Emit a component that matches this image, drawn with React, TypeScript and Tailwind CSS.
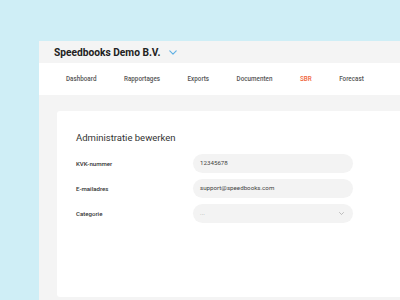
import React from "react";

const Chevron = ({ className, sw = 1.2 }: { className?: string; sw?: number }) => (
  <svg viewBox="0 0 10 6" className={className} fill="none" stroke="currentColor" strokeWidth={sw} strokeLinecap="round" strokeLinejoin="round">
    <path d="M1 1l4 4 4-4" />
  </svg>
);

const navItems = ["Dashboard", "Rapportages", "Exports", "Documenten", "SBR", "Forecast"];

export default function App() {
  return (
    <div className="w-[400px] h-[300px] bg-[#cfeef6] overflow-hidden flex flex-col pt-[41px] pl-[39px]" style={{ fontFamily: "Roboto, 'Liberation Sans', sans-serif" }}>
      <div className="flex-1 flex flex-col bg-[#f4f4f4]">
        <div className="h-[22px] flex items-center pl-[15px] pt-[1px]">
          <span className="text-[10.2px] font-bold text-[#222]">Speedbooks Demo B.V.</span>
          <Chevron sw={1.4} className="w-[8px] h-[5px] ml-[9px] text-[#5fb0e4]" />
        </div>
        <div className="h-[32px] bg-white flex items-center pl-[27px] pt-[1px] gap-[27.5px]">
          {navItems.map((n) => (
            <span key={n} className={`text-[6.3px] font-medium ${n === "SBR" ? "text-[#f0623a]" : "text-[#555]"}`}>{n}</span>
          ))}
        </div>
        <div className="flex-1 flex flex-col pt-[16px] pl-[18px] pb-[3px]">
          <div className="flex-1 bg-white rounded-l-[3px] pl-[19px] pt-[20px]">
            <div className="text-[9.5px] text-[#333] h-[14px] leading-[14px]">Administratie bewerken</div>
            <div className="flex flex-col gap-[6px] mt-[9px]">
              {[
                ["KVK-nummer", "12345678"],
                ["E-mailadres", "support@speedbooks.com"],
              ].map(([l, v]) => (
                <div key={l} className="flex items-center">
                  <span className="w-[117px] text-[6.1px] font-medium text-[#333]">{l}</span>
                  <div className="w-[160px] h-[19px] rounded-full bg-[#f3f3f3] flex items-center pl-[7px] text-[6.2px] text-[#444]">{v}</div>
                </div>
              ))}
              <div className="flex items-center">
                <span className="w-[117px] text-[6.1px] font-medium text-[#333]">Categorie</span>
                <div className="w-[160px] h-[19px] rounded-full bg-[#f3f3f3] flex items-center justify-between pl-[7px] pr-[9px] text-[6.2px] text-[#999]">
                  <span>...</span>
                  <Chevron className="w-[5px] h-[3px] text-[#999]" />
                </div>
              </div>
            </div>
          </div>
        </div>
      </div>
    </div>
  );
}
